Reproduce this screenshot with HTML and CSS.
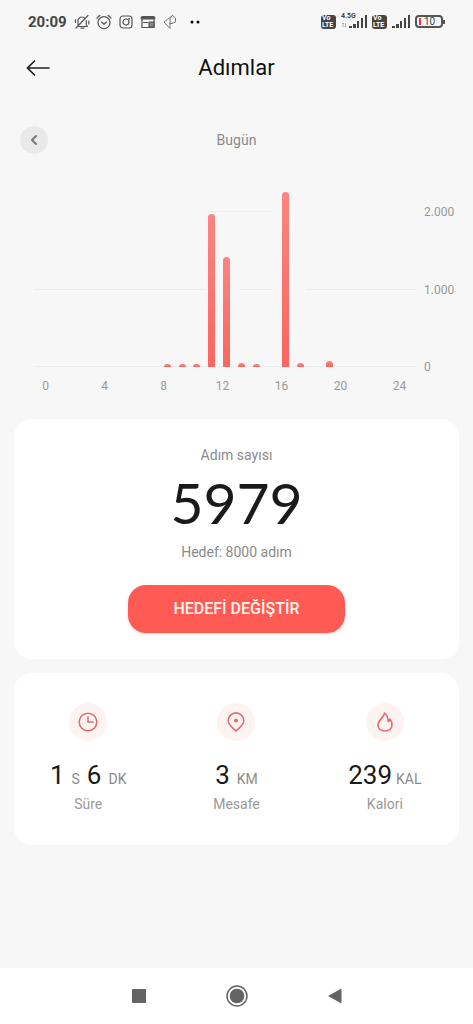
FILE: index.html
```html
<!DOCTYPE html>
<html lang="tr">
<head>
<meta charset="utf-8">
<meta name="viewport" content="width=device-width, initial-scale=1">
<title>Adımlar</title>
<link rel="stylesheet" href="styles.css">
</head>
<body>
<div class="status">
  <div class="status-left">
    <span class="clock">20:09</span>
    <svg width="16" height="16" viewBox="0 0 16 16" class="line"><path d="M4 11V7a4 4 0 0 1 7-2.600M12.300 6.500V11l1.200 1.500H5M7 14.200h3M14 1.500 2 14M1.500 5.500v3M14.800 7v3"/></svg>
    <svg width="16" height="16" viewBox="0 0 16 16" class="line"><circle cx="8" cy="8.700" r="6"/><path d="M5.500 8 8 10.200 10.500 8M1 4l3-2.700M15 4l-3-2.700"/></svg>
    <svg width="16" height="16" viewBox="0 0 16 16" class="line"><rect x="2" y="2" width="12" height="12" rx="3"/><circle cx="8" cy="8" r="3"/><circle cx="11.300" cy="4.700" r=".4"/></svg>
    <svg width="16" height="16" viewBox="0 0 16 16" class="line"><path d="M2 2.500h12v11H2z"/><path d="M2 4h12" stroke-width="3"/><path d="M9 8h5v5H9z" fill="#888"/><path d="M3.500 8.500h4"/></svg>
    <svg width="16" height="16" viewBox="0 0 16 16" class="line thin"><path d="M8 9.500V4.500L10.500 1.500 13.500 4v4L10 9.500H8M10.500 1.500 2 8l6 6.500V9.500"/></svg>
    <svg width="16" height="16" viewBox="0 0 16 16"><circle cx="8" cy="8" r="1.500"/><circle cx="14" cy="8" r="1.500"/></svg>
  </div>
  <div class="status-right">
    <span class="volte"><span>Vo</span><span>LTE</span></span>
    <span class="network">
      <span class="network-type">4.5G</span>
      <svg width="26" height="14" viewBox="0 0 26 14"><path d="M2 8v4M4.500 8v4M1 9l1-1 1 1M3.500 11l1 1 1-1" fill="none" stroke="#999" stroke-width=".7"/><path d="M8 11h3v2H8zM12 9h3v4h-3zM16 6h2v7h-2zM20 3h2v10h-2zM24 0h2v13h-2z" fill="#444"/></svg>
    </span>
    <span class="volte"><span>Vo</span><span>LTE</span></span>
    <svg class="signal" width="18" height="14" viewBox="0 0 18 14"><path d="M0 11h3v2H0zM4 9h3v4H4zM8 6h2v7H8zM12 3h2v10h-2zM16 0h2v13h-2z" fill="#444"/></svg>
    <span class="battery"><i class="charge"></i>10</span>
  </div>
</div>

<header class="header">
  <button class="back" aria-label="Geri"><svg width="24" height="18" viewBox="0 0 24 18"><path d="M23 9H2M8.500 2 1.500 9l7 7" fill="none" stroke="#222" stroke-width="1.700" stroke-linecap="round"/></svg></button>
  <h1>Adımlar</h1>
</header>

<main>
  <div class="day">
    <button class="prev" aria-label="Önceki gün"><svg width="8" height="12" viewBox="0 0 8 12"><path d="M6 2 2 6l4 4" fill="none" stroke="#777" stroke-width="2" stroke-linecap="round" stroke-linejoin="round"/></svg></button>
    <span>Bugün</span>
  </div>

  <section class="chart" aria-label="Saatlik adımlar">
    <div class="plot">
      <span class="rule rule-top"></span><span class="rule rule-mid"></span><span class="rule rule-base"></span>
      <div class="bars">
        <i></i><i></i><i></i><i></i><i></i><i></i><i></i><i></i>
        <i class="bar" style="height:3px"></i><i class="bar" style="height:3px"></i><i class="bar" style="height:3px"></i><i class="bar" style="height:153px"></i><i class="bar" style="height:110px"></i><i class="bar" style="height:4px"></i><i class="bar" style="height:3px"></i><i></i><i class="bar" style="height:175px"></i><i class="bar" style="height:4px"></i><i></i><i class="bar" style="height:6px"></i>
        <i></i><i></i><i></i><i></i><i></i>
      </div>
    </div>
    <div class="scale"><span>2.000</span><span>1.000</span><span>0</span></div>
    <div class="hours"><span>0</span><span>4</span><span>8</span><span>12</span><span>16</span><span>20</span><span>24</span></div>
  </section>

  <section class="card goal">
    <p>Adım sayısı</p>
    <strong class="steps">5979</strong>
    <p>Hedef: 8000 adım</p>
    <button class="change">HEDEFİ DEĞİŞTİR</button>
  </section>

  <section class="card stats">
    <div class="stat">
      <span class="badge"><svg width="20" height="20" viewBox="0 0 20 20"><circle cx="10" cy="10" r="8.800"/><path d="M10 5v5h5"/></svg></span>
      <p class="value"><b>1</b><span>S</span><b>6</b><span>DK</span></p>
      <p class="label">Süre</p>
    </div>
    <div class="stat">
      <span class="badge"><svg width="20" height="20" viewBox="0 0 20 20"><path d="M10 19C7.500 16.500 2.200 13 2.200 8.700a7.800 7.800 0 0 1 15.600 0C17.800 13 12.500 16.500 10 19z"/><circle cx="10" cy="8.500" r="1.200" fill="#e46a70"/></svg></span>
      <p class="value"><b>3</b><span>KM</span></p>
      <p class="label">Mesafe</p>
    </div>
    <div class="stat">
      <span class="badge"><svg width="20" height="20" viewBox="0 0 20 20"><path d="M9.500 1C9 6 3 8 3 13c0 3.700 3 6 7 6s7-2.300 7-6c0-2.500-.7-4.300-2-5.800-.3 1.200-.9 1.900-1.800 2.300C13.200 6 12 3 9.500 1z"/></svg></span>
      <p class="value tight"><b>239</b><span>KAL</span></p>
      <p class="label">Kalori</p>
    </div>
  </section>
</main>

<nav class="nav">
  <button aria-label="Son uygulamalar"><svg width="24" height="24" viewBox="0 0 24 24"><rect x="5" y="5" width="14" height="14" rx="1" fill="#636363"/></svg></button>
  <button aria-label="Ana ekran"><svg width="24" height="24" viewBox="0 0 24 24"><circle cx="12" cy="12" r="10" fill="none" stroke="#636363" stroke-width="1.500"/><circle cx="12" cy="12" r="7.300" fill="#636363"/></svg></button>
  <button aria-label="Geri dön"><svg width="24" height="24" viewBox="0 0 24 24"><path d="M5 12 18.500 4.500v15z" fill="#636363"/></svg></button>
</nav>
</body>
</html>
```
FILE: styles.css
```css
* { box-sizing: border-box; }
body {
  margin: 0;
  min-height: 100vh;
  display: flex;
  flex-direction: column;
  background: #f7f7f7;
  color: #8a8a8a;
  font: 14px/20px Roboto, sans-serif;
}
p, h1 { margin: 0; }
button { border: 0; padding: 0; background: none; font: inherit; cursor: pointer; }
svg { display: block; }

.status {
  display: flex;
  justify-content: space-between;
  align-items: center;
  height: 43px;
  padding: 0 30px 0 28px;
  color: #444;
}
.status-left { display: flex; align-items: center; gap: 6px; }
.clock { margin-right: 1px; font-size: 15px; font-weight: 700; }
.line { fill: none; stroke: #555; stroke-width: 1.2; stroke-linecap: round; stroke-linejoin: round; }
.thin { stroke: #777; stroke-width: 1; }
.status-right { display: flex; align-items: center; gap: 5px; }
.volte {
  display: grid;
  width: 15px;
  height: 14px;
  border-radius: 3px;
  background: #444;
  color: #fff;
  font-size: 7px;
  font-weight: 700;
  line-height: 7px;
  padding-left: 1px;
}
.network { position: relative; }
.network-type { position: absolute; top: -3px; left: 0; font-size: 7px; line-height: 8px; font-weight: 700; }
.battery {
  position: relative;
  display: flex;
  align-items: center;
  gap: 3px;
  width: 28px;
  height: 13px;
  padding-left: 2px;
  border: 2px solid #555;
  border-radius: 4px;
  font-size: 10px;
  line-height: 10px;
}
.battery::after { content: ""; position: absolute; right: -4px; top: 3px; width: 2px; height: 4px; background: #555; }
.charge { width: 2px; height: 7px; background: #e43a55; }

.header { display: grid; grid-template-columns: 48px 1fr 48px; align-items: center; height: 50px; padding: 0 14px; }
.back { display: grid; place-items: center; height: 48px; }
h1 { color: #111; font-size: 22px; line-height: 28px; font-weight: 400; text-align: center; }

main { flex: 1; }
.day { display: grid; grid-template-columns: 28px 1fr 28px; align-items: center; margin: 33px 20px 0; text-align: center; }
.prev { display: grid; place-items: center; width: 28px; height: 28px; border-radius: 50%; background: #e9e9e9; }

.chart { display: grid; grid-template-columns: 1fr 56px; padding-top: 29px; color: #999; font-size: 12px; line-height: 16px; }
.plot { display: grid; height: 184px; margin-left: 34px; }
.plot > * { grid-area: 1 / 1; }
.rule { align-self: end; height: 1px; background: #ededed; }
.rule-mid { margin-bottom: 77px; background: linear-gradient(90deg, #ebebeb 45%, transparent 45% 54%, #ebebeb 54% 62%, transparent 62% 71%, #ebebeb 71%); }
.rule-top { margin-bottom: 155px; background: linear-gradient(90deg, transparent 45%, #efefef 45% 62%, transparent 62%); }
.bars { display: grid; grid-template-columns: repeat(25, 1fr); align-items: end; justify-items: center; padding: 0 6px 0 8px; }
.bar { width: 7px; border-radius: 4px 4px 0 0; background: linear-gradient(#fa8580, #fa6660); }
.scale { display: flex; flex-direction: column; justify-content: space-between; height: 171px; margin-top: 21px; padding-left: 7px; }
.hours { grid-column: 1 / -1; display: grid; grid-template-columns: repeat(7, 1fr); margin: 3px 44px 0 16px; text-align: center; }

.card { margin: 0 14px 14px; border-radius: 18px; background: #fff; }
.goal { display: flex; flex-direction: column; align-items: center; margin-top: 25px; padding: 26px 20px; }
.steps { margin: 1px 0 4px; color: #1a1a1a; font: 400 57px/72px Lato, sans-serif; }
.change {
  width: 217px;
  max-width: 100%;
  height: 48px;
  margin-top: 23px;
  border-radius: 18px;
  background: #ff5a54;
  box-shadow: 0 1px 3px #f6d5d0;
  color: #fff5ea;
  font-size: 16px;
  font-weight: 500;
}
.stats { display: grid; grid-template-columns: repeat(3, 1fr); padding: 30px 0 31px; text-align: center; }
.badge { display: grid; place-items: center; width: 38px; height: 38px; margin: 0 auto; border-radius: 50%; background: #fdf4f2; }
.badge svg { fill: none; stroke: #e46a70; stroke-width: 1.6; stroke-linecap: round; stroke-linejoin: round; }
.value { display: flex; justify-content: center; align-items: baseline; gap: 7px; margin-top: 18px; line-height: 32px; }
.tight { gap: 4px; }
.value b { color: #1a1a1a; font-size: 26px; font-weight: 400; }
.label { margin-top: -1px; color: #999; }

.nav { display: grid; grid-template-columns: repeat(3, 98px); justify-content: center; height: 56px; background: #fff; }
.nav button { display: grid; place-items: center; }
```
